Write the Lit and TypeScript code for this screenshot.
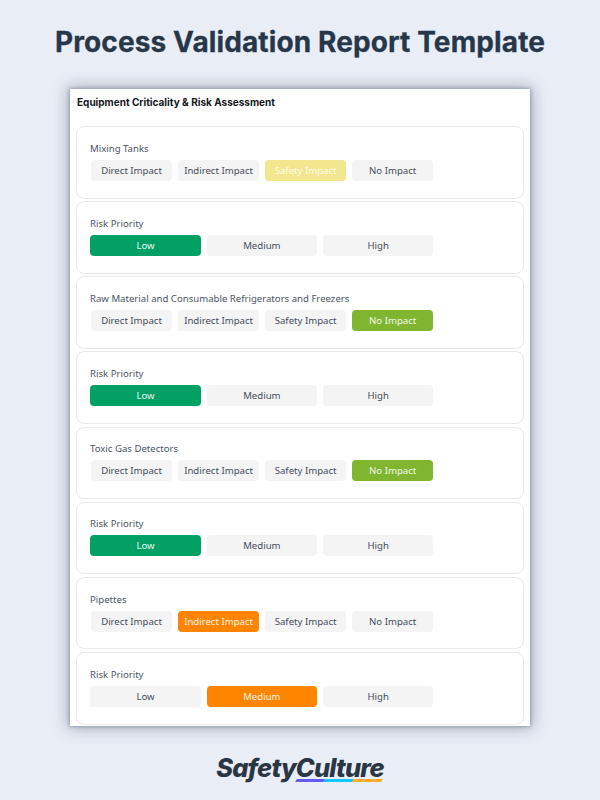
import { LitElement, html, css } from "lit";
import { customElement } from "lit/decorators.js";

type Row = { label: string; options: string[]; active: number; tone: string; wide?: boolean };
const impact = ["Direct Impact", "Indirect Impact", "Safety Impact", "No Impact"];
const risk = ["Low", "Medium", "High"];
const rows: Row[] = [
  { label: "Mixing Tanks", options: impact, active: 2, tone: "yellow" },
  { label: "Risk Priority", options: risk, active: 0, tone: "green", wide: true },
  { label: "Raw Material and Consumable Refrigerators and Freezers", options: impact, active: 3, tone: "lime" },
  { label: "Risk Priority", options: risk, active: 0, tone: "green", wide: true },
  { label: "Toxic Gas Detectors", options: impact, active: 3, tone: "lime" },
  { label: "Risk Priority", options: risk, active: 0, tone: "green", wide: true },
  { label: "Pipettes", options: impact, active: 1, tone: "orange" },
  { label: "Risk Priority", options: risk, active: 1, tone: "orange", wide: true },
];

@customElement("app-root")
export class AppRoot extends LitElement {
  static styles = css`
    :host { display: block; width: 600px; height: 800px; background: #e9edf6; overflow: hidden; }
    .page { height: 800px; display: flex; flex-direction: column; align-items: center; }
    h1 {
      margin: 0; padding-top: 25px; height: 89px; box-sizing: border-box; flex: none;
      font: 700 28px/34px "Inter", sans-serif; color: #27374a; white-space: nowrap; letter-spacing: 0.12px;
      -webkit-text-stroke: 0.3px #27374a;
    }
    .sheet {
      width: 460px; height: 637px; box-sizing: border-box; background: #fff; overflow: hidden; flex: none;
      box-shadow: 0 0 14px 2px rgba(50, 60, 85, 0.38), 0 0 3px 1px rgba(50, 60, 85, 0.28);
      padding: 6px 6px 0;
    }
    h2 { margin: 0 0 17px 1px; font: 700 10px/14px "Inter", sans-serif; color: #15181e; }
    .list { display: flex; flex-direction: column; gap: 2.55px; }
    .row {
      height: 72.6px; flex: none; box-sizing: border-box; border: 1px solid #e9e9ec; border-radius: 8px;
      padding: 14.7px 13px 0;
    }
    .label { font: 400 9.6px/14px "Noto Sans", sans-serif; color: #4b5563; height: 18px; white-space: nowrap; }
    .opts { display: flex; gap: 6px; padding-left: 1px; }
    .wide .opts { gap: 5.8px; padding-left: 0.3px; }
    .chip {
      width: 81.05px; height: 21px; flex: none; border-radius: 4px; background: #f4f4f5; color: #474d5a;
      font: 400 9.6px/21px "Noto Sans", sans-serif; text-align: center; white-space: nowrap;
    }
    .wide .chip { width: 110.5px; }
    .chip.yellow { background: #f2e68f; color: #fdfbe9; }
    .chip.green { background: #03a066; color: #e8f7f1; }
    .chip.lime { background: #7fb52f; color: #f4f9ea; }
    .chip.orange { background: #ff8500; color: #fff3e4; }
    .logo { flex: 1; display: flex; justify-content: center; padding-top: 29px; }
    .brand { display: flex; flex-direction: column; align-items: flex-end; }
    .word {
      font: italic 800 25.4px/25px "Inter", sans-serif; color: #2a3644; letter-spacing: -0.8px; white-space: nowrap;
    }
    .bar {
      width: 86px; height: 3px; margin: -1px 2px 0 0; transform: skewX(-30deg);
      background: linear-gradient(90deg, #6559f0 0 32%, #12c6ff 32% 66%, #ffab2e 66% 100%);
    }
  `;

  render() {
    return html`<div class="page">
      <h1>Process Validation Report Template</h1>
      <section class="sheet">
        <h2>Equipment Criticality &amp; Risk Assessment</h2>
        <div class="list">
          ${rows.map(
            (r) => html`<div class="row ${r.wide ? "wide" : ""}">
              <div class="label">${r.label}</div>
              <div class="opts">
                ${r.options.map((o, i) => html`<div class="chip ${i === r.active ? r.tone : ""}">${o}</div>`)}
              </div>
            </div>`
          )}
        </div>
      </section>
      <div class="logo">
        <div class="brand">
          <div class="word">SafetyCulture</div>
          <div class="bar"></div>
        </div>
      </div>
    </div>`;
  }
}
